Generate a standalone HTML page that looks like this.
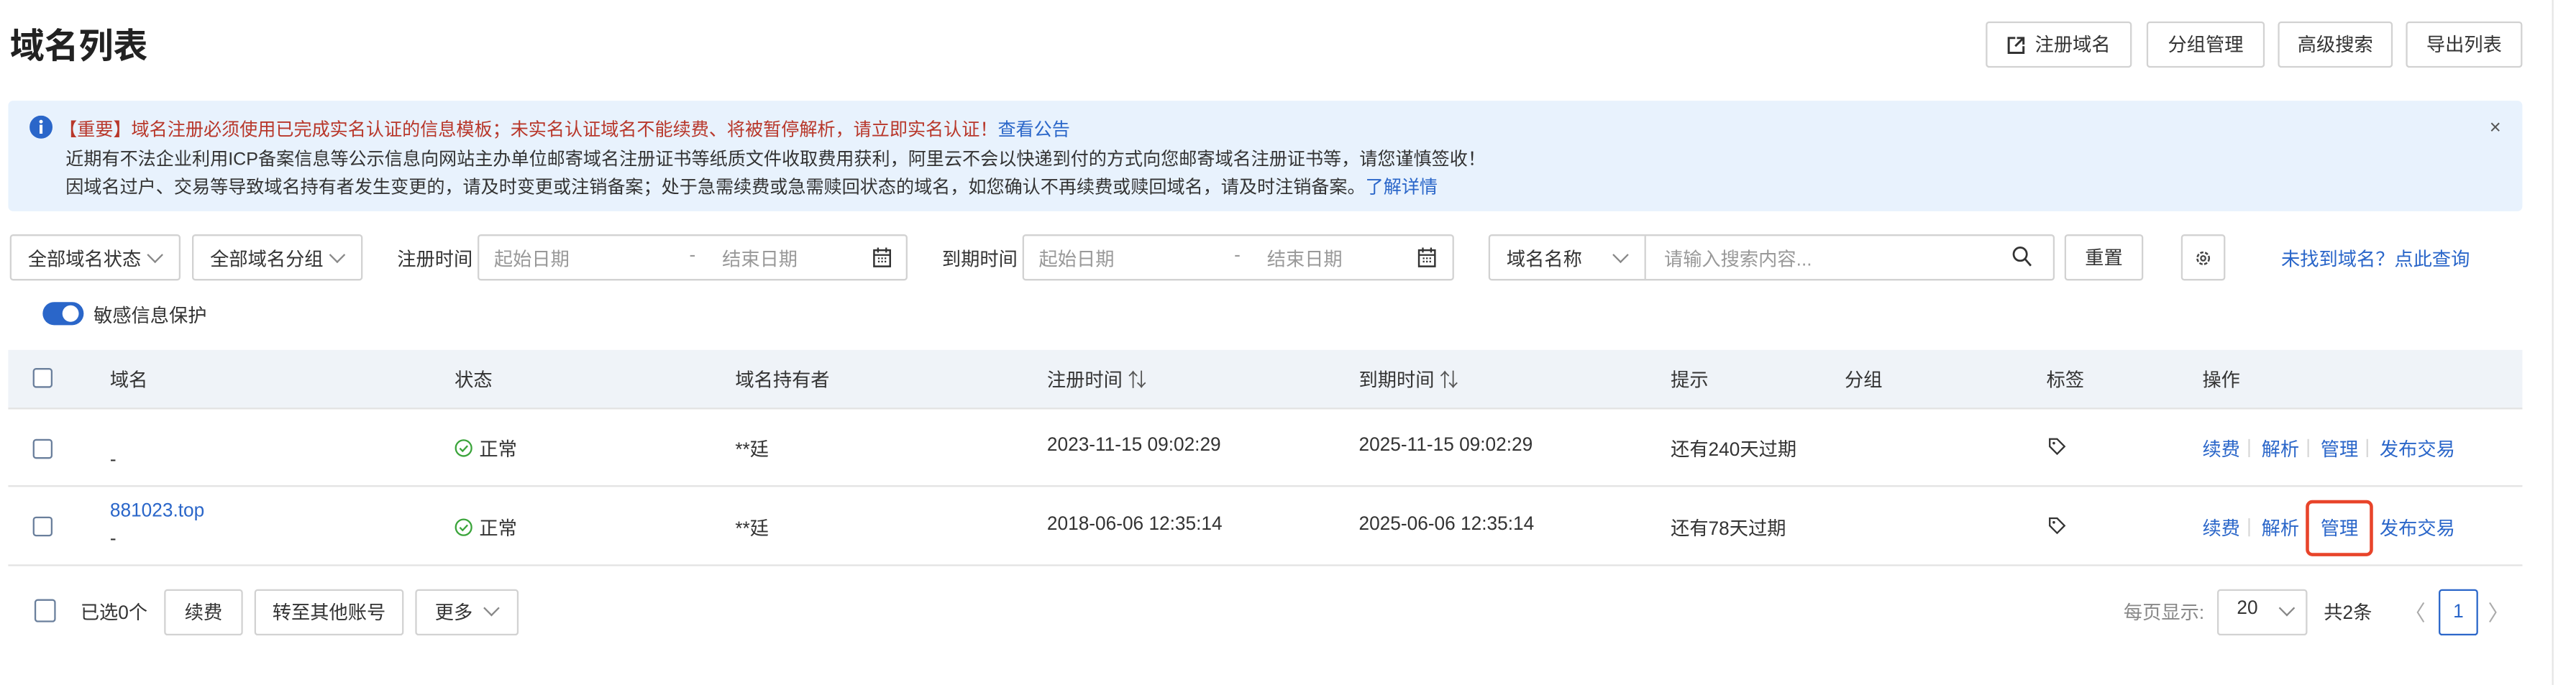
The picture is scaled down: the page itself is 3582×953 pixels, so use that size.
<!DOCTYPE html>
<html><head><meta charset="utf-8">
<style>
html,body{margin:0;padding:0;background:#fff;width:3582px;height:952px;overflow:hidden}
#s{position:absolute;left:0;top:0;width:1570px;height:415px;transform:scale(2.282,2.2962);transform-origin:0 0;font-family:"Liberation Sans","Noto Sans CJK SC",sans-serif;font-size:11.5px;color:#333}
.a{position:absolute;white-space:nowrap}
.btn{position:absolute;border:1px solid #d2d2d2;border-radius:2px;background:#fff;box-sizing:border-box;display:flex;align-items:center;justify-content:center;color:#333}
.box{position:absolute;border:1px solid #d2d2d2;border-radius:2px;background:#fff;box-sizing:border-box}
.ph{color:#999}
.cb{position:absolute;width:12px;height:12px;border:1px solid #6a7f9c;border-radius:2px;box-sizing:border-box;background:#fff}
.blue{color:#2a66c9}
.chev{position:absolute;width:6px;height:6px;border-right:1px solid #888;border-bottom:1px solid #888;transform:rotate(45deg)}
.sep{position:absolute;width:1px;height:11px;background:#d8d8d8}
</style></head><body><div id="s">
<div class="a" style="left:6px;top:12px;font-size:21px;font-weight:bold;color:#222">域名列表</div>

<div class="btn" style="left:1210px;top:13px;width:89px;height:28px"><svg width="11" height="11" viewBox="0 0 11 11" style="margin-right:6px"><path d="M5 1H1v9h9V6" fill="none" stroke="#333" stroke-width="1.3"/><path d="M6 1h4v4M10 1L5 6" fill="none" stroke="#333" stroke-width="1.3"/></svg>注册域名</div>
<div class="btn" style="left:1308px;top:13px;width:72px;height:28px">分组管理</div>
<div class="btn" style="left:1388px;top:13px;width:70px;height:28px">高级搜索</div>
<div class="btn" style="left:1466px;top:13px;width:71px;height:28px">导出列表</div>
<div style="position:absolute;left:1555px;top:0;width:1px;height:415px;background:#e6e6e6"></div>

<div style="position:absolute;left:5px;top:61px;width:1532px;height:67px;background:#e8f2fd;border-radius:3px"></div>
<svg class="a" style="left:18px;top:70px" width="14" height="14" viewBox="0 0 14 14"><circle cx="7" cy="7" r="7" fill="#2a66c9"/><rect x="6.1" y="5.6" width="1.8" height="5.4" fill="#fff"/><circle cx="7" cy="3.7" r="1.1" fill="#fff"/></svg>
<div class="a" style="left:36px;top:70px;font-size:11px;color:#b8372a">【重要】域名注册必须使用已完成实名认证的信息模板；未实名认证域名不能续费、将被暂停解析，请立即实名认证！<span class="blue">查看公告</span></div>
<div class="a" style="left:40px;top:88px;font-size:11px;color:#333">近期有不法企业利用ICP备案信息等公示信息向网站主办单位邮寄域名注册证书等纸质文件收取费用获利，阿里云不会以快递到付的方式向您邮寄域名注册证书等，请您谨慎签收！</div>
<div class="a" style="left:40px;top:105px;font-size:11px;color:#333">因域名过户、交易等导致域名持有者发生变更的，请及时变更或注销备案；处于急需续费或急需赎回状态的域名，如您确认不再续费或赎回域名，请及时注销备案。<span class="blue">了解详情</span></div>
<div class="a" style="left:1517px;top:70px;font-size:12px;color:#555">×</div>

<div class="box" style="left:6px;top:142px;width:104px;height:28px"></div>
<div class="a" style="left:17px;top:149px">全部域名状态</div><div class="chev" style="left:91px;top:151px"></div>
<div class="box" style="left:117px;top:142px;width:104px;height:28px"></div>
<div class="a" style="left:128px;top:149px">全部域名分组</div><div class="chev" style="left:202px;top:151px"></div>
<div class="a" style="left:242px;top:149px">注册时间</div>
<div class="box" style="left:291px;top:142px;width:262px;height:28px"></div>
<div class="a ph" style="left:301px;top:149px">起始日期</div><div class="a ph" style="left:420px;top:149px">-</div><div class="a ph" style="left:440px;top:149px">结束日期</div>
<svg class="a" style="left:532px;top:150px" width="11" height="12" viewBox="0 0 11 12"><rect x="0.6" y="1.6" width="9.8" height="9.8" fill="none" stroke="#333" stroke-width="1.1"/><path d="M3 0v3M8 0v3M1 4.5h9" stroke="#333"/><path d="M3 6.5h1M5 6.5h1M7 6.5h1M3 8.5h1M5 8.5h1M7 8.5h1" stroke="#333"/></svg>
<div class="a" style="left:574px;top:149px">到期时间</div>
<div class="box" style="left:623px;top:142px;width:263px;height:28px"></div>
<div class="a ph" style="left:633px;top:149px">起始日期</div><div class="a ph" style="left:752px;top:149px">-</div><div class="a ph" style="left:772px;top:149px">结束日期</div>
<svg class="a" style="left:864px;top:150px" width="11" height="12" viewBox="0 0 11 12"><rect x="0.6" y="1.6" width="9.8" height="9.8" fill="none" stroke="#333" stroke-width="1.1"/><path d="M3 0v3M8 0v3M1 4.5h9" stroke="#333"/><path d="M3 6.5h1M5 6.5h1M7 6.5h1M3 8.5h1M5 8.5h1M7 8.5h1" stroke="#333"/></svg>
<div class="box" style="left:907px;top:142px;width:345px;height:28px"></div>
<div style="position:absolute;left:1002px;top:143px;width:1px;height:26px;background:#d2d2d2"></div>
<div class="a" style="left:918px;top:149px">域名名称</div><div class="chev" style="left:984px;top:151px"></div>
<div class="a ph" style="left:1014px;top:149px">请输入搜索内容...</div>
<svg class="a" style="left:1226px;top:149px" width="12" height="13" viewBox="0 0 12 13"><circle cx="5" cy="5" r="4" fill="none" stroke="#333" stroke-width="1.2"/><path d="M8 8l3.5 4" stroke="#333" stroke-width="1.2"/></svg>
<div class="btn" style="left:1258px;top:142px;width:48px;height:28px">重置</div>
<div class="btn" style="left:1329px;top:142px;width:27px;height:28px"><svg width="11" height="11" viewBox="0 0 11 11"><circle cx="5.5" cy="5.5" r="3.6" fill="none" stroke="#444" stroke-width="1.1" stroke-dasharray="2 1"/><circle cx="5.5" cy="5.5" r="1.4" fill="none" stroke="#444"/></svg></div>
<div class="a blue" style="left:1390px;top:149px">未找到域名？点此查询</div>

<div style="position:absolute;left:26px;top:183px;width:25px;height:14px;border-radius:7px;background:#2a66c9"></div>
<div style="position:absolute;left:38px;top:185px;width:10px;height:10px;border-radius:5px;background:#fff"></div>
<div class="a" style="left:57px;top:183px">敏感信息保护</div>

<div style="position:absolute;left:5px;top:212px;width:1532px;height:35px;background:#eff3f8;border-bottom:1px solid #e3e3e3"></div>
<div class="cb" style="left:20px;top:223px"></div>
<div class="a" style="left:67px;top:222px">域名</div>
<div class="a" style="left:277px;top:222px">状态</div>
<div class="a" style="left:448px;top:222px">域名持有者</div>
<div class="a" style="left:638px;top:222px">注册时间 <span style="color:#555">⇅</span></div>
<div class="a" style="left:828px;top:222px">到期时间 <span style="color:#555">⇅</span></div>
<div class="a" style="left:1018px;top:222px">提示</div>
<div class="a" style="left:1124px;top:222px">分组</div>
<div class="a" style="left:1247px;top:222px">标签</div>
<div class="a" style="left:1342px;top:222px">操作</div>

<div style="position:absolute;left:5px;top:294px;width:1532px;height:1px;background:#e3e3e3"></div>
<div style="position:absolute;left:5px;top:342px;width:1532px;height:1px;background:#e3e3e3"></div>

<div class="cb" style="left:20px;top:266px"></div>
<div class="a" style="left:67px;top:273px">-</div>
<div class="cb" style="left:20px;top:313px"></div>
<div class="a blue" style="left:67px;top:304px">881023.top</div>
<div class="a" style="left:67px;top:321px">-</div>

<svg class="a" style="left:277px;top:266px" width="11" height="11" viewBox="0 0 11 11"><circle cx="5.5" cy="5.5" r="4.8" fill="none" stroke="#3aa43a"/><path d="M3.2 5.6l1.7 1.7 3-3.2" fill="none" stroke="#3aa43a"/></svg>
<div class="a" style="left:292px;top:264px">正常</div>
<svg class="a" style="left:277px;top:314px" width="11" height="11" viewBox="0 0 11 11"><circle cx="5.5" cy="5.5" r="4.8" fill="none" stroke="#3aa43a"/><path d="M3.2 5.6l1.7 1.7 3-3.2" fill="none" stroke="#3aa43a"/></svg>
<div class="a" style="left:292px;top:312px">正常</div>
<div class="a" style="left:448px;top:264px">**廷</div><div class="a" style="left:448px;top:312px">**廷</div>
<div class="a" style="left:638px;top:264px">2023-11-15 09:02:29</div><div class="a" style="left:638px;top:312px">2018-06-06 12:35:14</div>
<div class="a" style="left:828px;top:264px">2025-11-15 09:02:29</div><div class="a" style="left:828px;top:312px">2025-06-06 12:35:14</div>
<div class="a" style="left:1018px;top:264px">还有240天过期</div><div class="a" style="left:1018px;top:312px">还有78天过期</div>
<svg class="a" style="left:1248px;top:265px" width="11" height="11" viewBox="0 0 11 11"><path d="M1 1h4.5l4.5 4.5-4.5 4.5L1 5.5z" fill="none" stroke="#333"/><circle cx="3.5" cy="3.5" r="0.8" fill="#333"/></svg>
<svg class="a" style="left:1248px;top:313px" width="11" height="11" viewBox="0 0 11 11"><path d="M1 1h4.5l4.5 4.5-4.5 4.5L1 5.5z" fill="none" stroke="#333"/><circle cx="3.5" cy="3.5" r="0.8" fill="#333"/></svg>

<div class="a blue" style="left:1342px;top:264px">续费</div><div class="sep" style="left:1370px;top:266px"></div>
<div class="a blue" style="left:1378px;top:264px">解析</div><div class="sep" style="left:1406px;top:266px"></div>
<div class="a blue" style="left:1414px;top:264px">管理</div><div class="sep" style="left:1442px;top:266px"></div>
<div class="a blue" style="left:1450px;top:264px">发布交易</div>
<div class="a blue" style="left:1342px;top:312px">续费</div><div class="sep" style="left:1370px;top:314px"></div>
<div class="a blue" style="left:1378px;top:312px">解析</div><div class="sep" style="left:1406px;top:314px"></div>
<div class="a blue" style="left:1414px;top:312px">管理</div>
<div class="a blue" style="left:1450px;top:312px">发布交易</div>
<div style="position:absolute;left:1405px;top:303px;width:41px;height:34px;border:2px solid #e8442a;border-radius:4px;box-sizing:border-box"></div>

<div class="cb" style="left:21px;top:363px;height:14px;width:13px"></div>
<div class="a" style="left:49px;top:363px">已选0个</div>
<div class="btn" style="left:100px;top:357px;width:48px;height:28px">续费</div>
<div class="btn" style="left:155px;top:357px;width:91px;height:28px">转至其他账号</div>
<div class="btn" style="left:253px;top:357px;width:63px;height:28px;justify-content:flex-start;padding-left:11px">更多</div><div class="chev" style="left:296px;top:365px"></div>

<div class="a" style="left:1294px;top:363px;color:#888">每页显示:</div>
<div class="box" style="left:1351px;top:357px;width:55px;height:28px"></div>
<div class="a" style="left:1363px;top:363px">20</div><div class="chev" style="left:1390px;top:365px"></div>
<div class="a" style="left:1416px;top:363px">共2条</div>
<div class="a" style="left:1465px;top:361px;color:#aaa;font-size:13px">〈</div>
<div style="position:absolute;left:1486px;top:357px;width:24px;height:28px;border:1px solid #2a66c9;border-radius:2px;box-sizing:border-box;text-align:center;line-height:26px;color:#2a66c9">1</div>
<div class="a" style="left:1516px;top:361px;color:#aaa;font-size:13px">〉</div>
</div></body></html>
